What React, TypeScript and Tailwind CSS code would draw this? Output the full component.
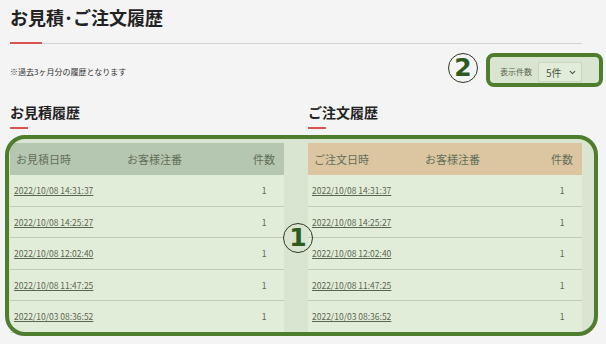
import { ChevronDown } from "lucide-react";

type Row = { date: string; ref: string; count: number };

const rows: Row[] = [
  { date: "2022/10/08 14:31:37", ref: "", count: 1 },
  { date: "2022/10/08 14:25:27", ref: "", count: 1 },
  { date: "2022/10/08 12:02:40", ref: "", count: 1 },
  { date: "2022/10/08 11:47:25", ref: "", count: 1 },
  { date: "2022/10/03 08:36:52", ref: "", count: 1 },
];

const HistoryTable: React.FC<{ dateLabel: string; headClass: string }> = ({
  dateLabel,
  headClass,
}) => (
  <div className="w-[274px]">
    <div className={`flex h-8 items-center text-[11px] text-[#555] ${headClass}`}>
      <span className="w-[117px] pl-[6px]">{dateLabel}</span>
      <span className="flex-1">お客様注番</span>
      <span className="w-10 text-center">件数</span>
    </div>
    {rows.map((r) => (
      <div
        key={r.date}
        className="flex h-[31.6px] items-center border-b border-[#d0d3d0] bg-white text-[8.5px] text-[#4a4a4a]"
      >
        <a href="#" className="w-[117px] pl-1 underline">
          {r.date}
        </a>
        <span className="flex-1">{r.ref}</span>
        <span className="w-10 text-center">{r.count}</span>
      </div>
    ))}
  </div>
);

// circled step marker
const Marker: React.FC<{ n: number; className: string }> = ({ n, className }) => (
  <div
    className={`absolute flex h-[30px] w-[30px] items-center justify-center rounded-full border border-[#2b3a22] pb-[1px] font-['DejaVu_Sans',sans-serif] text-[25px] font-bold leading-none text-[#2f5a1e] ${className}`}
  >
    {n}
  </div>
);

export default function App() {
  return (
    <div className="relative h-[344px] w-[606px] overflow-hidden bg-[#f4f4f4] font-['Noto_Sans_CJK_JP','Noto_Sans',sans-serif]">
      <div className="w-[582px] pl-[10px]">
        <h1 className="pt-1 text-[18px] font-bold leading-[26px] text-[#222]">
          お見積･ご注文履歴
        </h1>
        <div className="relative mt-[13px] h-px bg-[#d3d3d3]">
          <span className="absolute left-0 top-[-1px] h-[2px] w-8 bg-[#d9534f]" />
        </div>

        <div className="mt-[18px] flex h-5 items-center justify-between">
          <p className="text-[8px] text-[#333]">※過去3ヶ月分の履歴となります</p>
          <div className="flex items-center gap-[6px]">
            <span className="text-[8px] text-[#444]">表示件数</span>
            <div className="flex h-5 w-11 items-center justify-between border border-[#e0e0e0] bg-white pl-[7px] pr-[4px] text-[10px] text-[#333]">
              <span>5件</span>
              <ChevronDown size={9} strokeWidth={3} />
            </div>
          </div>
        </div>

        <div className="mt-5 grid grid-cols-[274px_274px] gap-x-6">
          {[
            { title: "お見積履歴", label: "お見積日時", head: "bg-[#c3ccc8]" },
            { title: "ご注文履歴", label: "ご注文日時", head: "bg-[#f6cbb4]" },
          ].map((t) => (
            <section key={t.title}>
              <h2 className="text-[14px] font-bold leading-5 text-[#222]">{t.title}</h2>
              <span className="mt-[5px] block h-[2px] w-[18px] bg-[#d9534f]" />
              <div className="mt-[14px]">
                <HistoryTable dateLabel={t.label} headClass={t.head} />
              </div>
            </section>
          ))}
        </div>
      </div>

      {/* highlight frames */}
      <div className="absolute left-[5px] top-[135px] h-[201px] w-[593px] rounded-[20px] border-4 border-[#4f7d2e] bg-[#8bb767]/25" />
      <div className="absolute left-[486px] top-[53px] h-[34px] w-[117px] rounded-[8px] border-4 border-[#4f7d2e] bg-[#8bb767]/25" />
      <Marker n={1} className="left-[283px] top-[223px]" />
      <Marker n={2} className="left-[448px] top-[53px]" />
    </div>
  );
}
